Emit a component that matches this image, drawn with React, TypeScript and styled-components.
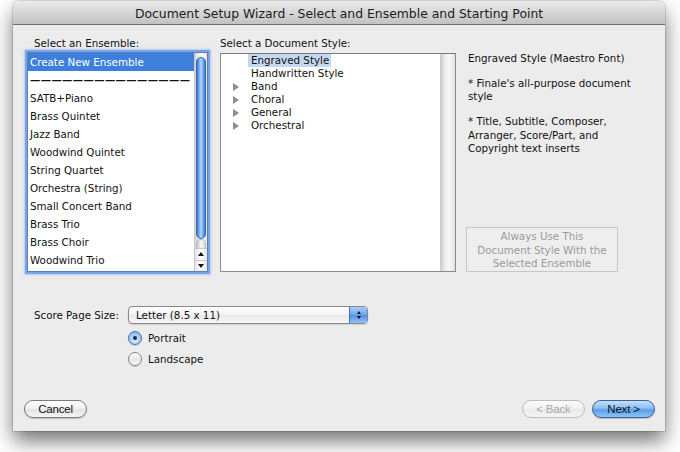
import React from "react";
import styled, { createGlobalStyle } from "styled-components";

const FONT = `"DejaVu Sans", "Lucida Grande", Verdana, sans-serif`;

const Global = createGlobalStyle`
  html, body { margin: 0; padding: 0; background: #ffffff; }
  body { font-family: ${FONT}; color: #111; }
  #root { width: 680px; height: 452px; overflow: hidden; }
  * { box-sizing: border-box; }
`;

const Stage = styled.div`
  width: 680px;
  height: 452px;
  padding: 1px 0 0 13px;
`;

const Window = styled.div`
  width: 652px;
  height: 430px;
  background: #ececec;
  border-radius: 6px 6px 0 0;
  box-shadow: 0 10px 20px rgba(0, 0, 0, 0.55), 0 0 0 1px rgba(0, 0, 0, 0.12);
  display: flex;
  flex-direction: column;
  overflow: hidden;
`;

const TitleBar = styled.div`
  height: 24px;
  flex: none;
  background: linear-gradient(#ececec, #d6d6d6 50%, #c2c2c2);
  border-bottom: 1px solid #6f6f6f;
  display: flex;
  align-items: center;
  justify-content: center;
  font-size: 12.4px;
  color: #1c1c1c;
  padding-top: 2px;
`;

const Main = styled.div`
  padding: 11px 14px 0 14px;
  display: flex;
  flex-direction: column;
`;

const TopRow = styled.div`
  display: grid;
  grid-template-columns: 181px 236px 1fr;
  column-gap: 12px;
  height: 236px;
`;

const Column = styled.div`
  display: flex;
  flex-direction: column;
  min-width: 0;
`;

const Label = styled.div<{ $indent?: number }>`
  font-size: 10.3px;
  line-height: 14px;
  height: 14px;
  padding-left: ${(p) => p.$indent ?? 0}px;
  white-space: nowrap;
`;

const EnsembleBox = styled.div`
  margin-top: 2px;
  height: 220px;
  border: 1px solid #5f7fb4;
  background: #fff;
  box-shadow: 0 0 1px 2px rgba(104, 155, 230, 0.85), 0 0 3px 3px rgba(130, 175, 240, 0.35);
  display: flex;
  overflow: hidden;
`;

const EnsembleItems = styled.div`
  flex: 1;
  min-width: 0;
`;

const EnsembleRow = styled.div<{ $selected?: boolean }>`
  height: 18px;
  line-height: 18px;
  font-size: 10.3px;
  padding-left: 2px;
  white-space: nowrap;
  overflow: hidden;
  background: ${(p) => (p.$selected ? "#3d7fdb" : "transparent")};
  color: ${(p) => (p.$selected ? "#ffffff" : "#111")};
`;

const Dashes = styled.span`
  letter-spacing: 0.4px;
  color: #111;
  font-weight: bold;
`;

const VScroll = styled.div`
  width: 13px;
  flex: none;
  display: flex;
  flex-direction: column;
  background: linear-gradient(to right, #d2d2d2, #eeeeee 30%, #fafafa 60%, #e4e4e4);
  border-left: 1px solid #c9c9c9;
`;

const Track = styled.div`
  flex: 1;
  padding: 4px 1px 0 1px;
  display: flex;
  flex-direction: column;
`;

const Thumb = styled.div`
  height: 182px;
  border-radius: 6px;
  border: 1px solid #3567b5;
  background: linear-gradient(to right, #3b73cc, #79aef0 28%, #b6d8fa 50%, #78b0f0 72%, #3f78d0);
`;

const TrackEnd = styled.div`
  margin-top: auto;
  height: 9px;
  border-radius: 6px 6px 0 0;
  background: linear-gradient(to right, #c4c4c4, #f6f6f6 50%, #d8d8d8);
  border: 1px solid #bdbdbd;
  border-bottom: none;
`;

const ArrowCell = styled.div<{ $down?: boolean }>`
  height: 13px;
  display: flex;
  align-items: center;
  justify-content: center;
  background: linear-gradient(to right, #e4e4e4, #ffffff 50%, #e6e6e6);
  border-top: 1px solid #c6c6c6;
  &::after {
    content: "";
    width: 0;
    height: 0;
    border-left: 3px solid transparent;
    border-right: 3px solid transparent;
    ${(p) => (p.$down ? "border-top: 4px solid #111;" : "border-bottom: 4px solid #111;")}
  }
`;

const DocBox = styled.div`
  margin-top: 3px;
  height: 219px;
  border: 1px solid #8c8c8c;
  border-top-color: #7a7a7a;
  background: #fff;
  display: flex;
`;

const DocItems = styled.div`
  flex: 1;
  padding-top: 0;
`;

const DocRow = styled.div`
  height: 13px;
  line-height: 13px;
  font-size: 10.3px;
  display: flex;
  white-space: nowrap;
`;

const Disclosure = styled.div<{ $show?: boolean }>`
  width: 27px;
  flex: none;
  display: flex;
  align-items: center;
  padding-left: 12px;
  &::before {
    content: "";
    display: ${(p) => (p.$show ? "block" : "none")};
    width: 0;
    height: 0;
    border-left: 6px solid #8e8e8e;
    border-top: 4.5px solid transparent;
    border-bottom: 4.5px solid transparent;
  }
`;

const DocLabel = styled.span<{ $selected?: boolean }>`
  padding: 0 2px 0 3px;
  background: ${(p) => (p.$selected ? "#c4d8f4" : "transparent")};
`;

const EmptyTrack = styled.div`
  width: 15px;
  flex: none;
  background: linear-gradient(to right, #c9c9c9, #e6e6e6 20%, #f7f7f7 55%, #ececec 85%, #dcdcdc);
  border-left: 1px solid #d0d0d0;
`;

const Description = styled.div`
  margin-top: 16px;
  font-size: 10.3px;
  line-height: 13.4px;
  flex: 1;
`;

const Para = styled.p`
  margin: 0 0 11.5px 0;
`;

const DisabledBox = styled.div`
  margin-left: -2px;
  width: 152px;
  height: 45px;
  border: 1px solid #c7c7c7;
  background: #eeeeee;
  color: #9a9a9a;
  font-size: 10.3px;
  line-height: 13.5px;
  text-align: center;
  padding-top: 2px;
`;

const PageRow = styled.div`
  margin-top: 34px;
  display: flex;
  align-items: center;
  padding-left: 7px;
  height: 18px;
`;

const PageLabel = styled.div`
  width: 94px;
  font-size: 10.3px;
`;

const Popup = styled.div`
  width: 240px;
  height: 18px;
  border: 1px solid #8a8a8a;
  border-radius: 4px;
  background: linear-gradient(#ffffff, #f2f2f2 50%, #e9e9e9 51%, #f7f7f7);
  display: flex;
  align-items: center;
  font-size: 10.3px;
  overflow: hidden;
  box-shadow: 0 1px 1px rgba(0, 0, 0, 0.12);
`;

const PopupText = styled.div`
  flex: 1;
  padding-left: 7px;
`;

const PopupCap = styled.div`
  width: 18px;
  height: 100%;
  flex: none;
  border-left: 1px solid #4d6fa6;
  background: linear-gradient(#a9cdf8, #6aa6ee 50%, #4b8fe6 51%, #8fc3f9);
  display: flex;
  flex-direction: column;
  align-items: center;
  justify-content: center;
  gap: 2px;
`;

const CapArrow = styled.div<{ $down?: boolean }>`
  width: 0;
  height: 0;
  border-left: 2.5px solid transparent;
  border-right: 2.5px solid transparent;
  ${(p) => (p.$down ? "border-top: 3px solid #111;" : "border-bottom: 3px solid #111;")}
`;

const RadioGroup = styled.div`
  margin-top: 7px;
  padding-left: 101px;
  display: flex;
  flex-direction: column;
  gap: 7px;
`;

const RadioRow = styled.div`
  display: flex;
  align-items: center;
  height: 14px;
  gap: 6px;
  font-size: 10.3px;
`;

const RadioCircle = styled.div<{ $checked?: boolean }>`
  width: 14px;
  height: 14px;
  border-radius: 50%;
  border: 1px solid ${(p) => (p.$checked ? "#4a6ea6" : "#858585")};
  background: ${(p) =>
    p.$checked
      ? "radial-gradient(circle at 50% 70%, #d9ecff, #9ec8f4 60%, #6ea5e6)"
      : "linear-gradient(#fdfdfd, #e9e9e9 55%, #f8f8f8)"};
  display: flex;
  align-items: center;
  justify-content: center;
  box-shadow: 0 1px 1px rgba(0, 0, 0, 0.15);
  &::after {
    content: "";
    display: ${(p) => (p.$checked ? "block" : "none")};
    width: 4px;
    height: 4px;
    border-radius: 50%;
    background: #1a2a40;
  }
`;

const Footer = styled.div`
  margin-top: auto;
  padding: 0 10px 13px 11px;
  display: flex;
  align-items: center;
  gap: 7px;
`;

const Spacer = styled.div`
  flex: 1;
`;

const PillButton = styled.div<{ $kind?: "default" | "disabled" | "primary" }>`
  width: 63px;
  height: 18px;
  border-radius: 9px;
  display: flex;
  align-items: center;
  justify-content: center;
  font-family: "Liberation Sans", Arial, sans-serif;
  font-size: 11.5px;
  letter-spacing: -0.2px;
  border: 1px solid
    ${(p) => (p.$kind === "disabled" ? "#bcbcbc" : p.$kind === "primary" ? "#3d5f96" : "#7b7b7b")};
  color: ${(p) => (p.$kind === "disabled" ? "#a8a8a8" : "#111")};
  background: ${(p) =>
    p.$kind === "primary"
      ? "linear-gradient(#c4e0fb, #8cc0f3 45%, #5c9de9 55%, #8ac4f8)"
      : p.$kind === "disabled"
      ? "linear-gradient(#fbfbfb, #f1f1f1 50%, #e9e9e9 51%, #f4f4f4)"
      : "linear-gradient(#ffffff, #f1f1f1 50%, #e2e2e2 51%, #f6f6f6)"};
  box-shadow: ${(p) => (p.$kind === "disabled" ? "none" : "0 1px 1px rgba(0,0,0,0.2)")};
`;

const ensembles = [
  "SATB+Piano",
  "Brass Quintet",
  "Jazz Band",
  "Woodwind Quintet",
  "String Quartet",
  "Orchestra (String)",
  "Small Concert Band",
  "Brass Trio",
  "Brass Choir",
  "Woodwind Trio",
];

const docStyles: { name: string; group?: boolean; selected?: boolean }[] = [
  { name: "Engraved Style", selected: true },
  { name: "Handwritten Style" },
  { name: "Band", group: true },
  { name: "Choral", group: true },
  { name: "General", group: true },
  { name: "Orchestral", group: true },
];

export default function App() {
  return (
    <>
      <Global />
      <Stage>
        <Window>
          <TitleBar>Document Setup Wizard - Select and Ensemble and Starting Point</TitleBar>
          <Main>
            <TopRow>
              <Column>
                <Label $indent={7}>Select an Ensemble:</Label>
                <EnsembleBox>
                  <EnsembleItems>
                    <EnsembleRow $selected>Create New Ensemble</EnsembleRow>
                    <EnsembleRow>
                      <Dashes>{"—".repeat(15)}</Dashes>
                    </EnsembleRow>
                    {ensembles.map((e) => (
                      <EnsembleRow key={e}>{e}</EnsembleRow>
                    ))}
                  </EnsembleItems>
                  <VScroll>
                    <Track>
                      <Thumb />
                      <TrackEnd />
                    </Track>
                    <ArrowCell />
                    <ArrowCell $down />
                  </VScroll>
                </EnsembleBox>
              </Column>
              <Column>
                <Label>Select a Document Style:</Label>
                <DocBox>
                  <DocItems>
                    {docStyles.map((d) => (
                      <DocRow key={d.name}>
                        <Disclosure $show={d.group} />
                        <DocLabel $selected={d.selected}>{d.name}</DocLabel>
                      </DocRow>
                    ))}
                  </DocItems>
                  <EmptyTrack />
                </DocBox>
              </Column>
              <Column>
                <Description>
                  <Para>Engraved Style (Maestro Font)</Para>
                  <Para>
                    * Finale's all-purpose document
                    <br />
                    style
                  </Para>
                  <Para>
                    * Title, Subtitle, Composer,
                    <br />
                    Arranger, Score/Part, and
                    <br />
                    Copyright text inserts
                  </Para>
                </Description>
                <DisabledBox>
                  Always Use This
                  <br />
                  Document Style With the
                  <br />
                  Selected Ensemble
                </DisabledBox>
              </Column>
            </TopRow>
            <PageRow>
              <PageLabel>Score Page Size:</PageLabel>
              <Popup>
                <PopupText>Letter (8.5 x 11)</PopupText>
                <PopupCap>
                  <CapArrow />
                  <CapArrow $down />
                </PopupCap>
              </Popup>
            </PageRow>
            <RadioGroup>
              <RadioRow>
                <RadioCircle $checked />
                Portrait
              </RadioRow>
              <RadioRow>
                <RadioCircle />
                Landscape
              </RadioRow>
            </RadioGroup>
          </Main>
          <Footer>
            <PillButton>Cancel</PillButton>
            <Spacer />
            <PillButton $kind="disabled">&lt; Back</PillButton>
            <PillButton $kind="primary">Next &gt;</PillButton>
          </Footer>
        </Window>
      </Stage>
    </>
  );
}
